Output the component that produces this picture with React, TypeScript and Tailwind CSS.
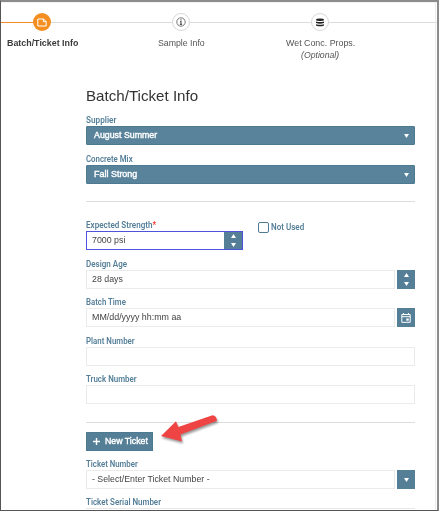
import React from "react";

function Label({ text, width, required }: { text: string; width: number; required?: boolean }) {
  return (
    <div className="flex h-[13px] items-center pt-[2px] font-[Roboto,sans-serif] text-[9px] font-semibold leading-[13px] text-[#557f98]">
      <Fit width={width}>
        {text}
        {required && <span className="text-[#f0382e]">*</span>}
      </Fit>
    </div>
  );
}

/* Text run scaled horizontally to an exact width. */
function Fit({ width, children }: { width: number; children: React.ReactNode }) {
  const ref = React.useRef<HTMLSpanElement>(null);
  const [scale, setScale] = React.useState(1);
  React.useLayoutEffect(() => {
    if (ref.current) setScale(width / ref.current.offsetWidth);
  }, [width]);
  return (
    <span className="block" style={{ width }}>
      <span ref={ref} className="inline-block origin-left whitespace-nowrap" style={{ transform: `scaleX(${scale})` }}>
        {children}
      </span>
    </span>
  );
}

function Down({ className = "" }: { className?: string }) {
  return (
    <svg viewBox="0 0 5 4" className={`h-1 w-[5px] fill-white ${className}`}>
      <path d="M0 0h5L2.5 4z" />
    </svg>
  );
}

function Spinner() {
  return (
    <div className="flex h-full w-[18px] flex-col items-center justify-center gap-[5px] bg-[#557f97]">
      <Down className="rotate-180" />
      <Down />
    </div>
  );
}

function Select({ value, width }: { value: string; width: number }) {
  return (
    <div className="flex h-[19px] items-center justify-between rounded-[1px] border border-[#4d7991] bg-[#59839b] pl-[7px] pr-[5px] text-[9.4px] text-white [-webkit-text-stroke:0.4px_white]">
      <Fit width={width}>{value}</Fit>
      <Down />
    </div>
  );
}

function Input({ value, width = 0, children }: { value?: string; width?: number; children?: React.ReactNode }) {
  return (
    <div className="flex h-[19px]">
      <div className="flex flex-1 items-center border border-[#ebebeb] pl-[5px] text-[9.4px] text-[#444]">
        {value && <Fit width={width}>{value}</Fit>}
      </div>
      {children && <div className="ml-[2px] h-full w-[18px] bg-[#557f97]">{children}</div>}
    </div>
  );
}

function Step({ icon, label, width, active, note }: { icon: React.ReactNode; label: string; width: number; active?: boolean; note?: string }) {
  return (
    <div className="flex w-[139px] shrink-0 flex-col items-center text-[9.5px] text-[#555]">
      <div className="flex h-[18px] w-full items-center">
        <div className={active ? "h-px flex-1 bg-[#f28c28]" : "h-px flex-1 bg-[#dcdcdc]"} />
        <div className={`flex size-[18px] items-center justify-center rounded-full ${active ? "bg-[#f58e20]" : "border border-[#d8d8d8] bg-white"}`}>
          {icon}
        </div>
        <div className="h-px flex-1 bg-[#dcdcdc]" />
      </div>
      <div className={`ml-px mt-[5px] h-[13px] leading-[13px] ${active ? "font-bold text-[#3a3a3a]" : ""}`}>
        <Fit width={width}>{label}</Fit>
      </div>
      {note && <div className="h-[12px] text-[9.4px] italic leading-[12px]"><Fit width={38}>{note}</Fit></div>}
    </div>
  );
}

export default function App() {
  return (
    <div className="relative h-[511px] w-[439px] overflow-hidden border-b border-l border-r-2 border-t-2 border-b-[#555] border-l-[#555] border-r-[#8c8c8c] border-t-[#8c8c8c] bg-white font-['Liberation_Sans',Arial,sans-serif]">
      <div className="absolute right-[1px] top-0 h-full w-px bg-[#ececec]" />
      <div className="h-px bg-[#f3f3f3]" />
      <div className="ml-[-29px] mt-[10px] flex h-[64px]">
        <Step
          active
          label="Batch/Ticket Info"
          width={71}
          icon={
            <svg viewBox="0 0 10 9" className="h-[9px] w-[10px] fill-none stroke-white">
              <path d="M.8 1h5.7L9.2 3.5V8H.8zM6.3 1v2.7h2.9" />
            </svg>
          }
        />
        <Step
          label="Sample Info"
          width={47}
          icon={
            <svg viewBox="0 0 10 10" className="size-[10px] fill-none stroke-[#555]">
              <circle cx="5" cy="5" r="4.2" strokeWidth=".8" />
              <path d="M5 2.2v1.2M4.1 4.6H5v2.8M3.9 7.4h2.2" strokeWidth="1.1" />
            </svg>
          }
        />
        <Step
          label="Wet Conc. Props."
          width={69}
          note="(Optional)"
          icon={
            <svg viewBox="0 0 8 9" className="h-[9px] w-2 fill-[#222]">
              <path d="M0 1.7Q0 .5 4 .5T8 1.7 4 2.9 0 1.7zM0 3.5q4 1 8 0v1.6Q4 6.2 0 5.1zM0 6.2q4 1 8 0v1.3Q4 9.2 0 7.5z" />
            </svg>
          }
        />
        <div className="mt-[9px] h-px w-[90px] shrink-0 bg-[#dcdcdc]" />
      </div>

      <div className="ml-[85px] w-[329px]">
        <div className="mt-[9px] h-[20px] text-[15px] leading-[20px] text-[#333]">
          <Fit width={112}>Batch/Ticket Info</Fit>
        </div>
        <div className="mt-[7px]"><Label text="Supplier" width={30} /></div>
        <Select value="August Summer" width={63} />
        <div className="mt-[7px]"><Label text="Concrete Mix" width={47} /></div>
        <Select value="Fall Strong" width={43} />
        <div className="mt-[17px] h-px bg-[#dedede]" />

        <div className="mt-[16px] flex h-[32px]">
          <div className="w-[157px]">
            <Label text="Expected Strength" width={70} required />
            <div className="flex h-[19px] border border-[#4f53dc]">
              <div className="flex flex-1 items-center pl-[5px] text-[9.4px] text-[#444]">
                <Fit width={33}>7000 psi</Fit>
              </div>
              <Spinner />
            </div>
          </div>
          <div className="ml-[15px] mt-[4px] flex h-[11px] items-center">
            <div className="mr-[2px] size-[11px] rounded-[2px] border border-[#4f7a94]" />
            <div className="-mt-[3px]"><Label text="Not Used" width={33} /></div>
          </div>
        </div>

        <div className="mt-[7px]"><Label text="Design Age" width={41} /></div>
        <Input value="28 days" width={31}><Spinner /></Input>
        <div className="mt-[6px]"><Label text="Batch Time" width={40} /></div>
        <Input value="MM/dd/yyyy hh:mm aa" width={89}>
          <div className="flex h-full items-center justify-center">
            <svg viewBox="0 0 10 10" className="size-[10px] fill-none stroke-white">
              <path d="M.8 1.5h8.4v7.8H.8zM.8 3.7h8.4M2.5 0v2M7.5 0v2" />
              <path d="M5.3 5.5h2.4v2.2H5.3z" className="fill-white stroke-none" />
            </svg>
          </div>
        </Input>
        <div className="mt-[7px]"><Label text="Plant Number" width={49} /></div>
        <Input />
        <div className="mt-[6px]"><Label text="Truck Number" width={51} /></div>
        <Input />
        <div className="mt-[18px] h-px bg-[#dedede]" />

        <div className="mt-[9px] flex h-[19px] w-[67px] items-center border border-[#4d7991] bg-[#557f97] pl-[6px] text-[9.4px] text-white [-webkit-text-stroke:0.4px_white]">
          <svg viewBox="0 0 7 7" className="mr-[5px] size-[7px] shrink-0 stroke-white stroke-[1.4]">
            <path d="M3.5 0v7M0 3.5h7" />
          </svg>
          <Fit width={43}>New Ticket</Fit>
        </div>
        <div className="mt-[6px]"><Label text="Ticket Number" width={52} /></div>
        <Input value="- Select/Enter Ticket Number -" width={118}>
          <div className="flex h-full items-center justify-center"><Down /></div>
        </Input>
        <div className="mt-[6px]"><Label text="Ticket Serial Number" width={75} /></div>
        <div className="h-px bg-[#e8e8e8]" />
      </div>

      <svg viewBox="155 408 70 45" className="absolute left-[154px] top-[406px] h-[45px] w-[70px] drop-shadow-[1px_2px_1px_rgba(0,0,0,0.4)]">
        <path d="M161 436L176 421.2L178.3 427L212.5 415.2Q216.5 415.5 217 420.8L180.5 434.5L182 441.5z" className="fill-[#ee4444]" />
      </svg>
    </div>
  );
}
